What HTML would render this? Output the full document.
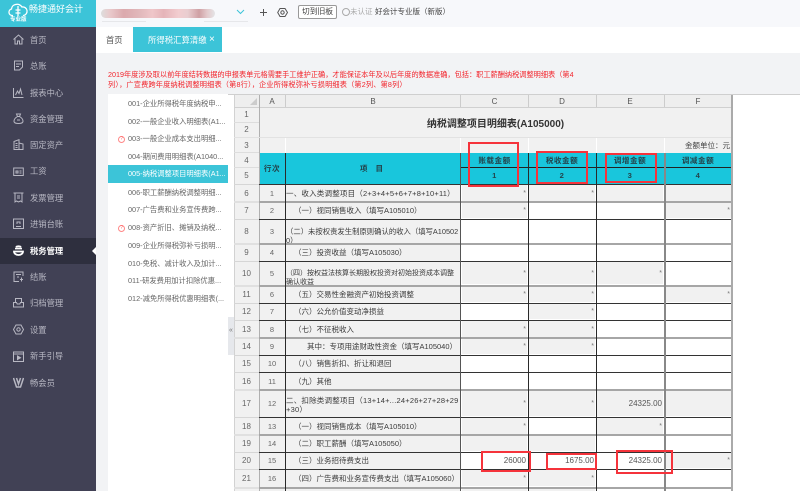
<!DOCTYPE html>
<html lang="zh"><head><meta charset="utf-8"><title>纳税调整项目明细表</title>
<style>
*{box-sizing:border-box}
html,body{margin:0;padding:0;width:800px;height:491px;overflow:hidden;background:#fff}
body{position:relative;font-family:"Liberation Sans","Noto Sans CJK SC",sans-serif;color:#333;filter:blur(.25px)}
.a{position:absolute}
.side{left:0;top:27px;width:96px;height:464px;background:#414155}
.m{position:absolute;left:30px;font-size:8.3px;line-height:12px;color:#b8b8c3;white-space:nowrap}
.ic{position:absolute;left:13px;width:11px;height:11px;fill:none;stroke:#b8b8c3;stroke-width:1}
.li{position:absolute;left:128px;font-size:7.3px;line-height:12px;color:#666;white-space:nowrap}
.q{position:absolute;left:118px;width:7px;height:7px;border:1px solid #f88;border-radius:50%;color:#f66;font-size:5px;line-height:5px;text-align:center}
.red{left:108px;font-size:7.2px;line-height:10px;color:#f3242c;white-space:nowrap}
table{position:absolute;left:234px;top:95px;width:498px;border-collapse:separate;border-spacing:0;table-layout:fixed;font-size:7.5px}
td{padding:0;overflow:hidden;white-space:nowrap;vertical-align:middle;background:#fff}
td.r{background:#f1f1f1;color:#666;text-align:center;font-size:8px}
td.n{background:#f1f1f1;color:#666;text-align:center;font-size:7.5px}
td.b{background:#f1f1f1;color:#3a3a3a}
td.g{background:#f1f1f1;border:1px solid #fff;text-align:right;color:#777;font-size:7px;padding-right:1px}
td.h{background:#eee;text-align:center;color:#555;font-size:8px}
td.t{background:#19c6dc;text-align:center;color:#23444c;font-weight:bold;font-size:7.6px;letter-spacing:.5px}
td.v{text-align:right;font-size:8px;color:#555;padding-right:2px}
.w{overflow:hidden;line-height:9px;white-space:nowrap}
.hl{position:absolute;left:234px;width:498px;height:1px;background:linear-gradient(90deg,#d6d6d6 25px,#333 25px)}
.hg{position:absolute;left:234px;width:498px;height:2px;background:linear-gradient(90deg,#e0e0e0 25px,#a6a6a6 25px)}
.vl{position:absolute;width:1px;top:153px;height:338px;background:#2a2a2a}
.box{position:absolute;border:2px solid #f5333b}
</style></head><body>

<!-- top bar -->
<div class="a" style="left:96px;top:0;width:704px;height:27px;background:#f7f8fb"></div>
<div class="a" style="left:0;top:0;width:96px;height:27px;background:#3cc4d8"></div>
<svg class="a" style="left:8px;top:2px" width="20" height="15" viewBox="0 0 20 15" fill="none" stroke="#fff" stroke-width="1.3"><path d="M5 13.5H4a3.3 3.3 0 0 1-.5-6.5 5 5 0 0 1 4-4.5 5.5 5.5 0 0 1 6.5 2.5 4.2 4.2 0 0 1 1.5 8.500H15"/><path d="M10 4v10M7.500 8h5M7.500 11h5"/></svg>
<div class="a" style="left:29px;top:3px;font-size:9px;line-height:12px;color:#fff;white-space:nowrap">畅捷通好会计</div>
<div class="a" style="left:10px;top:17px;font-size:5.500px;line-height:7px;color:#fff;font-weight:bold;white-space:nowrap">专业版</div>
<div class="a" style="left:101px;top:9px;width:114px;height:9px;border-radius:5px;background:linear-gradient(90deg,#ddd 0,#e9c9cb 8%,#dba9ad 20%,#e2b9bc 35%,#efc6c9 45%,#e5b4b9 55%,#f2cdd0 68%,#e9cdd0 76%,#cfa0a4 86%,#e3c9cb 93%,#e4e4e6 100%)"></div>
<div class="a" style="left:102px;top:21px;width:44px;height:1px;background:#e6e7ea"></div>
<div class="a" style="left:204px;top:21px;width:44px;height:1px;background:#e6e7ea"></div>
<svg class="a" style="left:236px;top:9px" width="9" height="6" viewBox="0 0 9 6" fill="none" stroke="#3cc4d8"><path d="M1 1l3.500 3.500L8 1"/></svg>
<svg class="a" style="left:259px;top:8px" width="9" height="9" viewBox="0 0 9 9" fill="none" stroke="#555"><path d="M4.500 1v7M1 4.500h7"/></svg>
<svg class="a" style="left:277px;top:7px" width="11" height="11" viewBox="0 0 11 11" fill="none" stroke="#555"><path d="M3 1.500h5l2.500 4-2.500 4H3L.7 5.500z"/><circle cx="5.500" cy="5.500" r="1.700"/></svg>
<div class="a" style="left:298px;top:5px;width:39px;height:14px;border:1px solid #999;border-radius:2px;background:#fff;font-size:7.800px;line-height:12px;text-align:center;color:#444">切到旧板</div>
<div class="a" style="left:342px;top:8px;width:8px;height:8px;border:1px solid #aaa;border-radius:50%"></div>
<div class="a" style="left:350px;top:6px;font-size:7.500px;line-height:12px;color:#aaa;white-space:nowrap">未认证</div>
<div class="a" style="left:375px;top:6px;font-size:7.500px;line-height:12px;color:#444;white-space:nowrap">好会计专业版（新版）</div>

<!-- tabs -->
<div class="a" style="left:96px;top:27px;width:704px;height:26px;background:#fff"></div>
<div class="a" style="left:106px;top:34px;font-size:8.300px;line-height:12px;color:#555">首页</div>
<div class="a" style="left:133px;top:27px;width:89px;height:25px;background:#3cc4d8"></div>
<div class="a" style="left:148px;top:34px;font-size:8.400px;line-height:12px;color:#fff;white-space:nowrap">所得税汇算清缴</div>
<div class="a" style="left:209px;top:34px;font-size:10px;line-height:12px;color:#fff">×</div>

<!-- content bg -->
<div class="a" style="left:96px;top:53px;width:704px;height:41px;background:#f2f3f5"></div>
<div class="a" style="left:96px;top:53px;width:12px;height:438px;background:#f2f3f5"></div>
<div class="a red" style="top:70px">2019年度涉及取以前年度结转数据的申报表单元格需要手工维护正确，才能保证本年及以后年度的数据准确，包括：职工薪酬纳税调整明细表（第4</div>
<div class="a red" style="top:80px;letter-spacing:.15px">列），广宣费跨年度纳税调整明细表（第8行），企业所得税弥补亏损明细表（第2列、第8列）</div>

<!-- sidebar -->
<div class="a side"></div>
<div class="a" style="left:0;top:238px;width:96px;height:26px;background:#2e2f3e"></div>
<div class="a" style="left:92px;top:247px;border:4px solid transparent;border-right-color:#fff;border-left:0"></div>
<svg class="ic" style="top:34px" viewBox="0 0 11 11"><path d="M.5 5.500L5.500 1l5 4.500M2 4.500V10h2.500V7h2v3H9V4.500"/></svg><div class="m" style="top:34px">首页</div>
<svg class="ic" style="top:60px" viewBox="0 0 11 11"><path d="M1.500 1h8v6l-3 3h-5zM3 4h5M3 6.500h3"/></svg><div class="m" style="top:60px">总账</div>
<svg class="ic" style="top:87px" viewBox="0 0 11 11"><path d="M.5 1v9.500h10M2.500 8l2-4 1.500 2.500L7.500 2l1.500 6"/></svg><div class="m" style="top:87px">报表中心</div>
<svg class="ic" style="top:113px" viewBox="0 0 11 11"><path d="M3.500 1h4L6.500 3.500h-2zM4.500 3.500C2 5 .8 7 1 8.500 1.200 10 3 10.500 5.500 10.500s4.300-.5 4.500-2C10.200 7 9 5 6.500 3.500M4 7h3"/></svg><div class="m" style="top:113px">资金管理</div>
<svg class="ic" style="top:139px" viewBox="0 0 11 11"><path d="M1 10.500V2.500L6 .7v9.800M6 4l4 1v5.500M.5 10.500h10M2.500 4.500h2M2.500 6.500h2M2.500 8.500h2"/></svg><div class="m" style="top:139px">固定资产</div>
<svg class="ic" style="top:166px" viewBox="0 0 11 11"><path d="M.7 2h9.600v7.500H.7zM3 5h2v2H3zM6.500 5h2M6.500 7h2"/></svg><div class="m" style="top:165px">工资</div>
<svg class="ic" style="top:192px" viewBox="0 0 11 11"><path d="M.5 1h10M2 1v9l1.500-1 2 1 2-1 1.500 1V1M4 4h3M4 6h3"/></svg><div class="m" style="top:192px">发票管理</div>
<svg class="ic" style="top:218px" viewBox="0 0 11 11"><path d="M.5 1h10v9.500H.5zM3 8.500h5M4 6V4h3v2"/></svg><div class="m" style="top:218px">进销台账</div>
<svg class="ic" style="top:245px;stroke:#fff;stroke-width:1.800" viewBox="0 0 11 11"><path d="M2 3.500h7M1 6.500c0 2 2 3.500 4.500 3.500S10 8.500 10 6.500zM3 2c1-1 4-1 5 0"/></svg><div class="m" style="top:245px;color:#fff;font-weight:bold">税务管理</div>
<svg class="ic" style="top:271px" viewBox="0 0 11 11"><path d="M10 5V1H1v9.500h5M3 3.500h5M4 6h2M8.500 6.500v4M7 8.500h3"/></svg><div class="m" style="top:271px">结账</div>
<svg class="ic" style="top:297px" viewBox="0 0 11 11"><path d="M2.500 5V1.500h6V5M.5 5.500h3l.7 1.500h2.600l.7-1.500h3v4.500H.5z"/></svg><div class="m" style="top:297px">归档管理</div>
<svg class="ic" style="top:324px" viewBox="0 0 11 11"><path d="M3 1h5l2.500 4.500L8 10H3L.5 5.500z"/><circle cx="5.500" cy="5.500" r="1.700"/></svg><div class="m" style="top:324px">设置</div>
<svg class="ic" style="top:351px" viewBox="0 0 11 11"><path d="M.5 1h10v9.500H.5zM.5 3h10"/><path d="M4.500 5v3.500l3-1.700z" fill="#b8b8c3"/></svg><div class="m" style="top:350px">新手引导</div>
<svg class="ic" style="top:377px;stroke-width:1.500" viewBox="0 0 11 11"><path d="M.5 1l3 9h4l3-9M3.500 1l2 6 2-6"/></svg><div class="m" style="top:377px">畅会员</div>

<!-- list -->
<div class="a" style="left:108px;top:94px;width:692px;height:397px;background:#fff"></div>
<div class="a" style="left:108px;top:165px;width:120px;height:18px;background:#3cc4d8"></div>
<div class="li" style="top:98px">001-企业所得税年度纳税申...</div>
<div class="li" style="top:116px">002-一般企业收入明细表(A1...</div>
<div class="li" style="top:133px">003-一般企业成本支出明细...</div><div class="q" style="top:136px">?</div>
<div class="li" style="top:151px">004-期间费用明细表(A1040...</div>
<div class="li" style="top:168px;color:#fff">005-纳税调整项目明细表(A1...</div>
<div class="li" style="top:187px">006-职工薪酬纳税调整明细...</div>
<div class="li" style="top:204px">007-广告费和业务宣传费跨...</div>
<div class="li" style="top:222px">008-资产折旧、摊销及纳税...</div><div class="q" style="top:225px">?</div>
<div class="li" style="top:240px">009-企业所得税弥补亏损明...</div>
<div class="li" style="top:258px">010-免税、减计收入及加计...</div>
<div class="li" style="top:275px">011-研发费用加计扣除优惠...</div>
<div class="li" style="top:293px">012-减免所得税优惠明细表(...</div>
<div class="a" style="left:228px;top:317px;width:6px;height:38px;background:#e6e8ec;color:#777;font-size:7px;line-height:28px;text-align:center;overflow:hidden">«</div>

<!-- sheet -->
<div class="a" style="left:228px;top:94px;width:572px;height:1px;background:#cfcfcf"></div>
<div class="a" style="left:234px;top:95px;width:498px;height:396px;overflow:hidden">
<table style="left:0;top:0">
<colgroup><col style="width:25px"><col style="width:26px"><col style="width:176px"><col style="width:67px"><col style="width:68px"><col style="width:68px"><col style="width:68px"></colgroup>
<tr style="height:12px"><td class="h"></td><td class="h">A</td><td class="h">B</td><td class="h">C</td><td class="h">D</td><td class="h">E</td><td class="h">F</td></tr>
<tr style="height:15px"><td class="r">1</td><td colspan="6" rowspan="2" style="background:#f1f1f1;text-align:center;font-size:10px;font-weight:bold;color:#333">纳税调整项目明细表(A105000)</td></tr>
<tr style="height:15px"><td class="r">2</td></tr>
<tr style="height:16px"><td class="r">3</td><td class="n"></td><td class="n"></td><td class="n"></td><td class="n"></td><td class="n"></td><td class="n" style="text-align:right;color:#444;font-size:7.500px;padding-right:2px">金额单位：元</td></tr>
<tr style="height:14px"><td class="r">4</td><td class="t" rowspan="2">行次</td><td class="t" rowspan="2" style="letter-spacing:3px">项 目</td><td class="t">账载金额</td><td class="t">税收金额</td><td class="t">调增金额</td><td class="t">调减金额</td></tr>
<tr style="height:17px"><td class="r">5</td><td class="t">1</td><td class="t">2</td><td class="t">3</td><td class="t">4</td></tr>
<tr style="height:18px"><td class="r">6</td><td class="n">1</td><td class="b" style="padding-left:1px;letter-spacing:.2px">一、收入类调整项目（2+3+4+5+6+7+8+10+11）</td><td class="g">*</td><td class="g">*</td><td class="g"></td><td class="g"></td></tr>
<tr style="height:17px"><td class="r">7</td><td class="n">2</td><td class="b" style="padding-left:9px">（一）视同销售收入（填写A105010）</td><td class="g">*</td><td></td><td></td><td class="g">*</td></tr>
<tr style="height:25px"><td class="r">8</td><td class="n">3</td><td class="b" style="padding-left:1px;font-size:7.350px"><div class="w" style="height:25px;padding-top:8px">（二）未按权责发生制原则确认的收入（填写A10502<br>0）</div></td><td></td><td></td><td></td><td></td></tr>
<tr style="height:17px"><td class="r">9</td><td class="n">4</td><td class="b" style="padding-left:9px">（三）投资收益（填写A105030）</td><td></td><td></td><td></td><td></td></tr>
<tr style="height:24px"><td class="r">10</td><td class="n">5</td><td class="b" style="padding-left:1px;font-size:7.000px"><div class="w" style="height:24px;padding-top:8px">（四）按权益法核算长期股权投资对初始投资成本调整<br>确认收益</div></td><td class="g">*</td><td class="g">*</td><td class="g">*</td><td></td></tr>
<tr style="height:18px"><td class="r">11</td><td class="n">6</td><td class="b" style="padding-left:9px">（五）交易性金融资产初始投资调整</td><td class="g">*</td><td class="g">*</td><td></td><td class="g">*</td></tr>
<tr style="height:17px"><td class="r">12</td><td class="n">7</td><td class="b" style="padding-left:9px">（六）公允价值变动净损益</td><td></td><td class="g">*</td><td></td><td></td></tr>
<tr style="height:18px"><td class="r">13</td><td class="n">8</td><td class="b" style="padding-left:9px">（七）不征税收入</td><td class="g">*</td><td class="g">*</td><td></td><td></td></tr>
<tr style="height:17px"><td class="r">14</td><td class="n">9</td><td class="b" style="padding-left:22px">其中：专项用途财政性资金（填写A105040）</td><td class="g">*</td><td class="g">*</td><td></td><td></td></tr>
<tr style="height:17px"><td class="r">15</td><td class="n">10</td><td class="b" style="padding-left:9px">（八）销售折扣、折让和退回</td><td></td><td></td><td></td><td></td></tr>
<tr style="height:18px"><td class="r">16</td><td class="n">11</td><td class="b" style="padding-left:9px">（九）其他</td><td></td><td></td><td></td><td></td></tr>
<tr style="height:27px"><td class="r">17</td><td class="n">12</td><td class="b" style="padding-left:1px"><div class="w" style="height:27px;padding-top:6px;letter-spacing:.2px">二、扣除类调整项目（13+14+...24+26+27+28+29<br>+30）</div></td><td class="g">*</td><td class="g">*</td><td class="g" style="font-size:8px;color:#555;padding-right:1px">24325.00</td><td class="g"></td></tr>
<tr style="height:18px"><td class="r">18</td><td class="n">13</td><td class="b" style="padding-left:9px">（一）视同销售成本（填写A105010）</td><td class="g">*</td><td></td><td class="g">*</td><td></td></tr>
<tr style="height:17px"><td class="r">19</td><td class="n">14</td><td class="b" style="padding-left:9px">（二）职工薪酬（填写A105050）</td><td class="g"></td><td class="g"></td><td></td><td></td></tr>
<tr style="height:17px"><td class="r">20</td><td class="n">15</td><td class="b" style="padding-left:9px">（三）业务招待费支出</td><td class="v">26000</td><td class="v">1675.00</td><td class="v">24325.00</td><td class="g">*</td></tr>
<tr style="height:18px"><td class="r">21</td><td class="n">16</td><td class="b" style="padding-left:9px">（四）广告费和业务宣传费支出（填写A105060）</td><td class="g">*</td><td class="g">*</td><td></td><td></td></tr>
<tr style="height:18px"><td class="r"></td><td class="n"></td><td class="b"></td><td class="g"></td><td class="g"></td><td></td><td></td></tr>
</table>
</div>

<!-- corner -->
<div class="a" style="left:250px;top:98px;border-left:7px solid transparent;border-bottom:7px solid #ccc"></div>

<!-- header grid lines -->
<div class="a" style="left:234px;top:95px;width:1px;height:396px;background:#d2d2d2"></div>
<div class="a" style="left:234px;top:107px;width:498px;height:1px;background:#d0d0d0"></div>
<div class="a" style="left:259px;top:95px;width:1px;height:396px;background:#b0b0b0"></div>
<div class="a" style="left:285px;top:95px;width:1px;height:12px;background:#ccc"></div>
<div class="a" style="left:460px;top:95px;width:1px;height:12px;background:#ccc"></div>
<div class="a" style="left:528px;top:95px;width:1px;height:12px;background:#ccc"></div>
<div class="a" style="left:596px;top:95px;width:1px;height:12px;background:#ccc"></div>
<div class="a" style="left:664px;top:95px;width:1px;height:12px;background:#ccc"></div>
<div class="a" style="left:285px;top:137px;width:1px;height:16px;background:#fff"></div>
<div class="a" style="left:460px;top:137px;width:1px;height:16px;background:#fff"></div>
<div class="a" style="left:528px;top:137px;width:1px;height:16px;background:#fff"></div>
<div class="a" style="left:596px;top:137px;width:1px;height:16px;background:#fff"></div>
<div class="a" style="left:664px;top:137px;width:1px;height:16px;background:#fff"></div>
<div class="a" style="left:234px;top:122px;width:25px;height:1px;background:#ddd"></div>
<div class="a" style="left:234px;top:137px;width:498px;height:1px;background:#e2e2e2"></div>
<div class="a" style="left:234px;top:152px;width:25px;height:1px;background:#ddd"></div>
<div class="a" style="left:234px;top:167px;width:25px;height:1px;background:#ddd"></div>

<!-- body horizontal lines -->
<div class="a" style="left:460px;top:167px;width:272px;height:1px;background:#222"></div>
<div class="hl" style="top:184px"></div>
<div class="hg" style="top:201px"></div>
<div class="hl" style="top:219px"></div>
<div class="hg" style="top:243px"></div>
<div class="hl" style="top:261px"></div>
<div class="hg" style="top:285px"></div>
<div class="hl" style="top:303px"></div>
<div class="hl" style="top:320px"></div>
<div class="hg" style="top:337px"></div>
<div class="hl" style="top:355px"></div>
<div class="hl" style="top:372px"></div>
<div class="hg" style="top:389px"></div>
<div class="hl" style="top:417px"></div>
<div class="hg" style="top:434px"></div>
<div class="hl" style="top:452px"></div>
<div class="hl" style="top:469px"></div>
<div class="hg" style="top:487px"></div>
<!-- body vertical lines -->
<div class="vl" style="left:285px"></div>
<div class="vl" style="left:460px;background:#555"></div>
<div class="vl" style="left:528px"></div>
<div class="vl" style="left:596px"></div>
<div class="vl" style="left:664px;background:#888;width:1.500px"></div>
<div class="vl" style="left:731px;background:#aaa;width:1.500px;top:95px;height:396px"></div>

<!-- red boxes -->
<div class="box" style="left:468px;top:142px;width:51px;height:45px"></div>
<div class="box" style="left:536px;top:151px;width:52px;height:33px"></div>
<div class="box" style="left:605px;top:153px;width:52px;height:30px"></div>
<div class="box" style="left:481px;top:451px;width:50px;height:21px"></div>
<div class="box" style="left:546px;top:453px;width:51px;height:17px"></div>
<div class="box" style="left:616px;top:450px;width:57px;height:24px"></div>
</body></html>
